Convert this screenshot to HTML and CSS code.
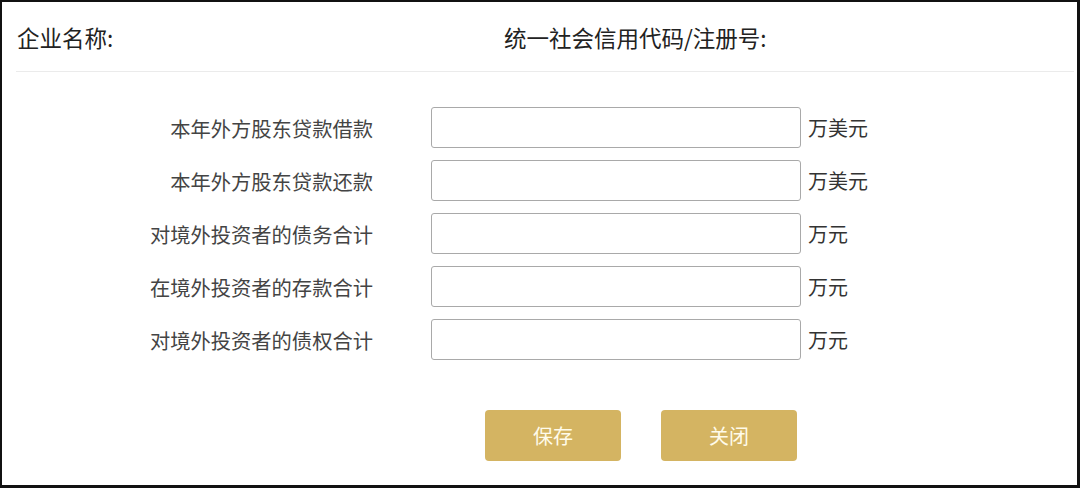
FILE: index.html
```html
<!DOCTYPE html>
<html lang="zh-CN">
<head>
<meta charset="utf-8">
<title>外债信息</title>
<link rel="stylesheet" href="styles.css">
</head>
<body>
<div class="frame">
  <div class="header">
    <div class="h-name">企业名称:</div>
    <div class="h-code">统一社会信用代码/注册号:</div>
  </div>
  <div class="form">
    <div class="label">本年外方股东贷款借款</div>
    <input class="field" type="text">
    <div class="unit">万美元</div>

    <div class="label">本年外方股东贷款还款</div>
    <input class="field" type="text">
    <div class="unit">万美元</div>

    <div class="label">对境外投资者的债务合计</div>
    <input class="field" type="text">
    <div class="unit">万元</div>

    <div class="label">在境外投资者的存款合计</div>
    <input class="field" type="text">
    <div class="unit">万元</div>

    <div class="label">对境外投资者的债权合计</div>
    <input class="field" type="text">
    <div class="unit">万元</div>
  </div>
  <div class="actions">
    <button class="btn" type="button">保存</button>
    <button class="btn" type="button">关闭</button>
  </div>
</div>
</body>
</html>
```

FILE: styles.css
```css
html, body {
  margin: 0;
  padding: 0;
  background: #fff;
}
body {
  font-family: "Noto Sans CJK SC", "Noto Sans", sans-serif;
  color: #333;
}
.frame {
  box-sizing: border-box;
  width: 1080px;
  height: 488px;
  border-style: solid;
  border-color: #111;
  border-width: 2px 3px 3px 2px;
  background: #fff;
}
.header {
  display: flex;
  align-items: center;
  height: 69px;
  margin: 0 3px 0 14px;
  border-bottom: 1px solid #ebebeb;
  font-size: 22.5px;
  color: #222;
}
.h-name {
  width: 487px;
  padding-left: 1px;
}
.form {
  display: grid;
  grid-template-columns: 371px 58px 370px auto;
  row-gap: 12px;
  padding-top: 35px;
  align-items: center;
}
.label {
  grid-column: 1;
  text-align: right;
  font-size: 20.3px;
  color: #444;
}
.field {
  grid-column: 3;
  box-sizing: border-box;
  width: 370px;
  height: 41px;
  margin: 0;
  border: 1px solid #a9a9a9;
  border-radius: 3px;
  background: #fff;
  padding: 0 8px;
  font: inherit;
  outline: none;
}
.unit {
  grid-column: 4;
  font-size: 20px;
  color: #333;
  padding-left: 7px;
}
.actions {
  display: flex;
  gap: 40px;
  padding-left: 483px;
  margin-top: 50px;
}
.btn {
  width: 136px;
  height: 51px;
  border: none;
  border-radius: 4px;
  background: #d4b462;
  color: #fffbea;
  font-family: inherit;
  font-size: 20px;
  padding: 0;
  cursor: pointer;
}
```
